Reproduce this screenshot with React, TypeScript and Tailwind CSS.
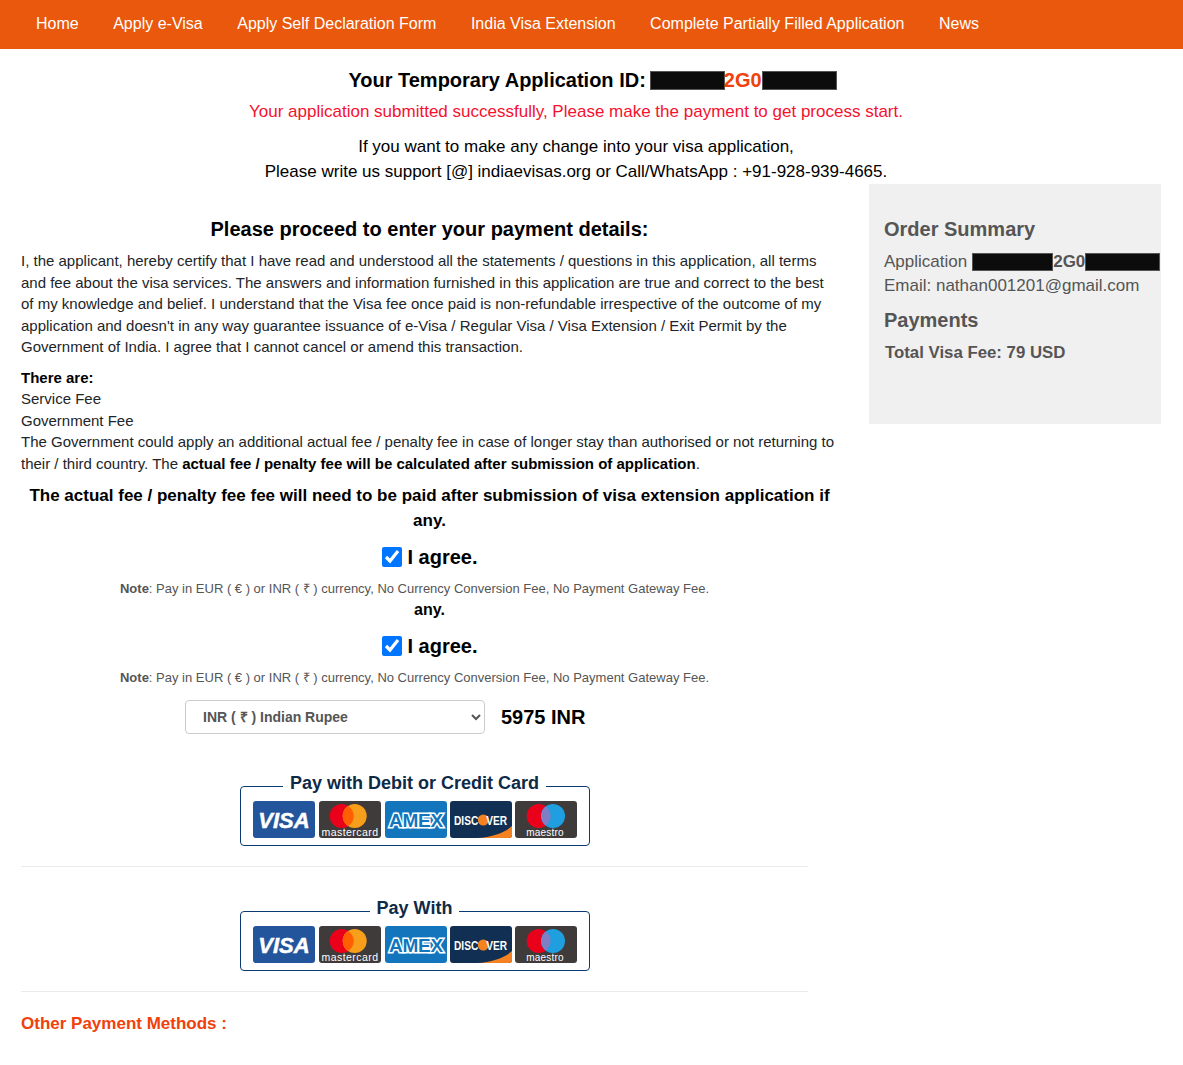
const navItems = [
  'Home',
  'Apply e-Visa',
  'Apply Self Declaration Form',
  'India Visa Extension',
  'Complete Partially Filled Application',
  'News',
];

const logoFont = '"Liberation Sans", Arial, sans-serif';

function VisaLogo() {
  return (
    <svg width="62" height="37" viewBox="0 0 62 37">
      <rect width="62" height="37" rx="3" fill="#22559b" />
      <text x="31" y="27" textAnchor="middle" fontFamily={logoFont} fontSize="22" fontWeight="700" fontStyle="italic" fill="#fff" stroke="#fff" strokeWidth="0.5">VISA</text>
    </svg>
  );
}

function MastercardLogo() {
  return (
    <svg width="62" height="37" viewBox="0 0 62 37">
      <rect width="62" height="37" rx="3" fill="#3f3b3a" />
      <circle cx="22.7" cy="15" r="12" fill="#eb001b" />
      <circle cx="35.7" cy="15" r="12" fill="#f79e1b" />
      <path d="M29.2 4.9a12 12 0 0 1 0 20.2a12 12 0 0 1 0-20.2z" fill="#ff5f00" />
      <text x="31" y="34.5" textAnchor="middle" fontFamily={logoFont} fontSize="10.5" fill="#fff" letterSpacing="0.45">mastercard</text>
    </svg>
  );
}

function AmexLogo() {
  return (
    <svg width="62" height="37" viewBox="0 0 62 37">
      <rect width="62" height="37" rx="3" fill="#1376bd" />
      <text x="31" y="25.5" textAnchor="middle" fontFamily={logoFont} fontSize="19" fontWeight="700" fill="#1376bd" stroke="#fff" strokeWidth="3" paintOrder="stroke" letterSpacing="-0.2">AMEX</text>
    </svg>
  );
}

function DiscoverLogo() {
  return (
    <svg width="62" height="37" viewBox="0 0 62 37">
      <rect width="62" height="37" rx="3" fill="#112f52" />
      <path d="M62 25v9a3 3 0 0 1-3 3H27C42 36 54 32 62 25z" fill="#f58220" />
      <circle cx="33.3" cy="19" r="5.5" fill="#f58220" />
      <text x="4" y="23.5" textLength="53" lengthAdjust="spacingAndGlyphs" fontFamily={logoFont} fontSize="12.5" fontWeight="700" fill="#fff">
        DISC<tspan fill="none">O</tspan>VER
      </text>
    </svg>
  );
}

function MaestroLogo() {
  return (
    <svg width="62" height="37" viewBox="0 0 62 37">
      <rect width="62" height="37" rx="3" fill="#3f3b3a" />
      <circle cx="23.7" cy="15" r="12" fill="#eb001b" />
      <circle cx="38" cy="15" r="12" fill="#1f9fdf" />
      <path d="M30.85 5.4a12 12 0 0 1 0 19.2a12 12 0 0 1 0-19.2z" fill="#7f7fc6" />
      <text x="30" y="34.5" textAnchor="middle" fontFamily={logoFont} fontSize="10" fill="#fff" letterSpacing="0.2">maestro</text>
    </svg>
  );
}

function CardBox({ title }: { title: string }) {
  return (
    <fieldset className="w-[350px] h-[73px] mx-auto border border-[#0b3a75] rounded-[4px]">
      <legend className="mx-auto px-[7px] pb-[6px] text-[18px] leading-[20px] font-bold text-[#0e2a47]">{title}</legend>
      <div className="flex gap-[3px] mt-[2px] pl-[12px]">
        <div className="flex gap-[4px]">
          <VisaLogo />
          <MastercardLogo />
          <AmexLogo />
        </div>
        <DiscoverLogo />
        <MaestroLogo />
      </div>
    </fieldset>
  );
}

function Redacted({ className }: { className: string }) {
  return <span className={`inline-block align-middle bg-[#0c0c0c] border border-[#555] ${className}`} />;
}

function Agree() {
  return (
    <>
      <label className="flex items-center justify-center gap-[5px] w-[817px] h-[24px] mt-[14px] pl-px text-[20px] font-bold text-black">
        <input type="checkbox" defaultChecked className="w-[20px] h-[20px] accent-[#0075ff]" />
        I agree.
      </label>
      <p className="w-[787px] mt-[10px] text-center text-[13px] leading-[20px] text-[#555]">
        <b>Note</b>: Pay in EUR ( € ) or INR ( ₹ ) currency, No Currency Conversion Fee, No Payment Gateway Fee.
      </p>
    </>
  );
}

export default function App() {
  return (
    <div className="min-h-[1065px] bg-white text-[#212529] font-['Liberation_Sans',Arial,sans-serif]">
      <nav className="flex items-center h-[49px] pb-[2px] bg-[#e9580c] pl-[36px] gap-[34.5px] text-[16px] text-white">
        {navItems.map((item) => (
          <a key={item} href="#">{item}</a>
        ))}
      </nav>

      <div className="w-[1152px] text-center">
        <h1 className="mt-[19px] h-[24px] pl-[33px] text-[20px] leading-[24px] font-bold text-black flex justify-center items-center">
          Your Temporary Application ID:
          <Redacted className="ml-[4px] w-[75px] h-[19px]" />
          <span className="-ml-px text-[#f0410c]">2G0</span>
          <Redacted className="w-[75px] h-[19px]" />
        </h1>
        <p className="mt-[8px] text-[17px] leading-[24px] text-[#f5112f]">
          Your application submitted successfully, Please make the payment to get process start.
        </p>
        <p className="mt-[10px] text-[17px] leading-[25px] text-black">
          If you want to make any change into your visa application,
          <br />
          Please write us support [@] indiaevisas.org or Call/WhatsApp : +91-928-939-4665.
        </p>
      </div>

      <div className="flex pl-[21px] pr-[22px]">
        <main className="w-[817px]">
          <h2 className="mt-[32px] text-center text-[20px] leading-[26px] font-bold text-black">
            Please proceed to enter your payment details:
          </h2>
          <p className="mt-[8px] text-[15px] leading-[21.5px]">
            I, the applicant, hereby certify that I have read and understood all the statements / questions in this application, all terms
            and fee about the visa services. The answers and information furnished in this application are true and correct to the best
            of my knowledge and belief. I understand that the Visa fee once paid is non-refundable irrespective of the outcome of my
            application and doesn't in any way guarantee issuance of e-Visa / Regular Visa / Visa Extension / Exit Permit by the
            Government of India. I agree that I cannot cancel or amend this transaction.
          </p>
          <div className="mt-[9px] text-[15px] leading-[21.5px]">
            <b className="text-black">There are:</b>
            <br />
            Service Fee
            <br />
            Government Fee
            <br />
            The Government could apply an additional actual fee / penalty fee in case of longer stay than authorised or not returning to
            their / third country. The <b className="text-black">actual fee / penalty fee will be calculated after submission of application</b>.
          </div>
          <p className="mt-[9px] -mb-[2px] text-center text-[17px] leading-[25px] font-bold text-black">
            The actual fee / penalty fee fee will need to be paid after submission of visa extension application if any.
          </p>
          <Agree />
          <p className="w-[817px] mt-[1px] text-center text-[16px] leading-[20px] font-bold text-black">any.</p>
          <Agree />

          <div className="flex items-center w-[787px] mt-[12px] pl-[164px]">
            <select className="w-[300px] h-[34px] pl-[13px] border border-[#ccc] rounded-[4px] bg-white text-[14px] font-bold text-[#555]">
              <option>INR ( ₹ ) Indian Rupee</option>
            </select>
            <span className="ml-[16px] text-[20px] font-bold text-black">5975 INR</span>
          </div>

          <div className="w-[787px] mt-[39px]">
            <CardBox title="Pay with Debit or Credit Card" />
            <hr className="mt-[20px] border-[#e9ecef]" />
            <div className="mt-[31px]">
              <CardBox title="Pay With" />
            </div>
            <hr className="mt-[20px] border-[#e9ecef]" />
          </div>

          <h3 className="mt-[21px] text-[17px] leading-[22px] font-bold text-[#f0410c]">Other Payment Methods :</h3>
        </main>

        <aside className="w-[292px] h-[240px] ml-[31px] bg-[#f0f0f0] pl-[15px] text-[#555]">
          <h3 className="mt-[32px] text-[20px] leading-[26px] font-bold">Order Summary</h3>
          <p className="mt-[8px] flex items-center text-[17px] leading-[24px] whitespace-nowrap">
            <span className="mr-[5px]">Application</span>
            <Redacted className="w-[81px] h-[18px]" />
            <b>2G0</b>
            <Redacted className="w-[75px] h-[18px]" />
          </p>
          <p className="text-[17px] leading-[24px]">Email: nathan001201@gmail.com</p>
          <h3 className="mt-[9px] text-[20px] leading-[26px] font-bold">Payments</h3>
          <p className="mt-[8px] pl-px text-[16.8px] leading-[24px] font-bold">Total Visa Fee: 79 USD</p>
        </aside>
      </div>
    </div>
  );
}
